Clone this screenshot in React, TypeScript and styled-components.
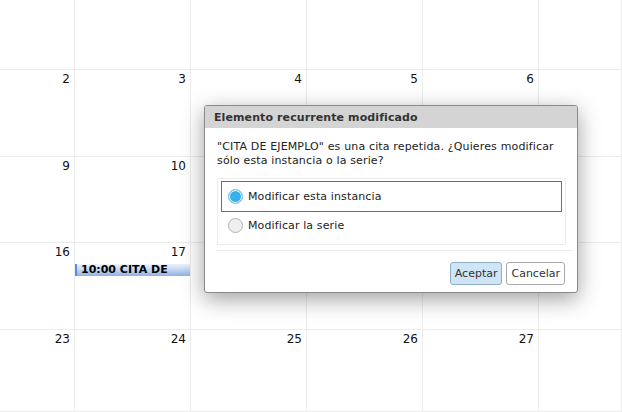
import React from "react";
import styled, { createGlobalStyle } from "styled-components";

const Global = createGlobalStyle`
  html, body { margin: 0; padding: 0; background: #fff; }
  body { font-family: "DejaVu Sans", "Liberation Sans", sans-serif; overflow: hidden; }
  #root { width: 622px; height: 412px; position: relative; }
`;

const Calendar = styled.div`
  display: grid;
  grid-template-columns: 75px repeat(4, 116px) 1fr;
  grid-template-rows: 70px 87px 86px 87px 1fr;
  width: 622px;
  height: 412px;
  background: #fff;
`;

const Cell = styled.div`
  box-sizing: border-box;
  border-right: 1px solid #ececec;
  border-bottom: 1px solid #ececec;
  display: flex;
  flex-direction: column;
  min-width: 0;
  overflow: hidden;
`;

const DayNum = styled.div`
  font-size: 12px;
  line-height: 14px;
  color: #111;
  text-align: right;
  padding: 2px 4px 0 0;
`;

const Event = styled.div`
  margin-top: 5px;
  height: 12px;
  line-height: 12px;
  font-size: 11px;
  font-weight: bold;
  color: #000;
  overflow: hidden;
  padding-left: 4px;
  border-left: 2px solid #5b8fd6;
  background: linear-gradient(to bottom, #eef3fb 0%, #c6d8f2 45%, #8fb1e2 100%);
`;

const Overlay = styled.div`
  position: absolute;
  left: 204px;
  top: 105px;
  width: 374px;
  height: 188px;
  box-sizing: border-box;
  border: 1px solid #8a8a8a;
  border-radius: 3px;
  background: #fff;
  box-shadow: 0 6px 22px rgba(0, 0, 0, 0.38);
  display: flex;
  flex-direction: column;
  overflow: hidden;
`;

const TitleBar = styled.div`
  height: 22px;
  background: #d4d4d4;
  display: flex;
  align-items: center;
  padding-left: 9px;
  font-size: 11px;
  font-weight: bold;
  letter-spacing: 0.1px;
  color: #333;
`;

const Body = styled.div`
  display: flex;
  flex-direction: column;
  padding: 12px 11px 0 12px;
`;

const Message = styled.div`
  font-size: 11px;
  line-height: 14px;
  letter-spacing: 0.15px;
  color: #222;
`;

const Fieldset = styled.div`
  margin-top: 10px;
  border: 1px solid #ececec;
  padding: 2px 3px 5px 3px;
  display: flex;
  flex-direction: column;
`;

const Option = styled.div<{ $selected?: boolean }>`
  box-sizing: border-box;
  height: ${(p) => (p.$selected ? "31px" : "27px")};
  border: 1px solid ${(p) => (p.$selected ? "#5f7280" : "transparent")};
  display: flex;
  align-items: center;
  padding-left: 6px;
  gap: 5px;
  font-size: 11px;
  letter-spacing: 0.12px;
  color: #222;
`;

const Radio = styled.span<{ $checked?: boolean }>`
  box-sizing: border-box;
  width: 15px;
  height: 15px;
  border-radius: 50%;
  flex: none;
  border: 1px solid ${(p) => (p.$checked ? "#78c4ef" : "#b3b3b3")};
  background: ${(p) => (p.$checked ? "#3daee9" : "#eeeff0")};
  box-shadow: ${(p) => (p.$checked ? "inset 0 0 0 1px #fff" : "none")};
`;

const Separator = styled.div`
  height: 1px;
  background: #ededed;
  margin: 5px -7px 0 -1px;
`;

const Footer = styled.div`
  display: flex;
  justify-content: flex-end;
  gap: 4px;
  padding: 11px 12px 0 0;
`;

const Button = styled.button<{ $primary?: boolean }>`
  height: 23px;
  padding: 0 4px;
  font-family: "DejaVu Sans", sans-serif;
  font-size: 11px;
  color: #333;
  border-radius: 3px;
  border: 1px solid ${(p) => (p.$primary ? "#8fb0c8" : "#a8a8a8")};
  background: ${(p) => (p.$primary ? "#cfe5f5" : "#fff")};
  cursor: pointer;
`;

const rows: (number | null)[][] = [
  [null, null, null, null, null, null],
  [2, 3, 4, 5, 6, null],
  [9, 10, 11, 12, 13, null],
  [16, 17, 18, 19, 20, null],
  [23, 24, 25, 26, 27, null],
];

export default function App() {
  return (
    <>
      <Global />
      <Calendar>
        {rows.map((r, ri) =>
          r.map((d, ci) => (
            <Cell key={`${ri}-${ci}`}>
              {d !== null && <DayNum>{d}</DayNum>}
              {d === 17 && <Event>10:00 CITA DE EJEMPLO</Event>}
            </Cell>
          ))
        )}
      </Calendar>
      <Overlay>
        <TitleBar>Elemento recurrente modificado</TitleBar>
        <Body>
          <Message>
            "CITA DE EJEMPLO" es una cita repetida. ¿Quieres modificar
            <br />
            sólo esta instancia o la serie?
          </Message>
          <Fieldset>
            <Option $selected>
              <Radio $checked />
              Modificar esta instancia
            </Option>
            <Option>
              <Radio />
              Modificar la serie
            </Option>
          </Fieldset>
          <Separator />
        </Body>
        <Footer>
          <Button $primary>Aceptar</Button>
          <Button>Cancelar</Button>
        </Footer>
      </Overlay>
    </>
  );
}
